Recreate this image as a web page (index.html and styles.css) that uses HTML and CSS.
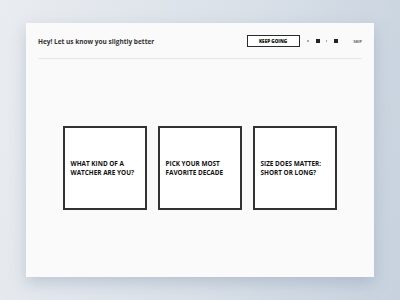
FILE: index.html
```html
<!DOCTYPE html>
<html lang="en">
<head>
    <meta charset="UTF-8">
    <meta name="viewport" content="width=device-width, initial-scale=1.0">
    <title>Onboarding</title>
    <link rel="stylesheet" href="styles.css">
</head>
<body>
    <div class="panel">
        <div class="header">
            <h1 class="title">Hey! Let us know you slightly better</h1>
            <div class="controls">
                <button class="keep-going">KEEP GOING</button>
                <span class="dot"></span>
                <span class="square"></span>
                <span class="dot"></span>
                <span class="square"></span>
                <span class="skip">SKIP</span>
            </div>
        </div>
        <div class="divider"></div>
        <div class="choices">
            <div class="choice">WHAT KIND OF A WATCHER ARE YOU?</div>
            <div class="choice">PICK YOUR MOST FAVORITE DECADE</div>
            <div class="choice">SIZE DOES MATTER: SHORT OR LONG?</div>
        </div>
    </div>
</body>
</html>
```

FILE: styles.css
```css
html, body {
    margin: 0;
    height: 100%;
}
body {
    width: 400px;
    height: 300px;
    padding: 23px 26px;
    box-sizing: border-box;
    background: linear-gradient(100deg, #e9ecf0 0%, #d9e0e8 55%, #c7d2de 100%);
    font-family: "Open Sans", sans-serif;
}
.panel {
    height: 254px;
    background-color: #fafafa;
    box-shadow: 0 6px 14px rgba(120, 140, 165, 0.35);
    padding: 12px 12px 0 12px;
    box-sizing: border-box;
    display: flex;
    flex-direction: column;
}
.header {
    display: flex;
    align-items: center;
    justify-content: space-between;
    height: 12px;
}
.title {
    margin: 0;
    font-size: 6.5px;
    font-weight: 700;
    color: #333;
}
.controls {
    display: flex;
    align-items: center;
}
.keep-going {
    width: 53px;
    height: 12px;
    padding: 0;
    border: 1.2px solid #2a2a2a;
    background-color: #fff;
    font-family: "Open Sans", sans-serif;
    font-size: 4.6px;
    font-weight: 800;
    color: #111;
    margin-right: 7.5px;
}
.dot {
    width: 1.5px;
    height: 1.5px;
    background-color: #aaa;
}
.square {
    width: 3.5px;
    height: 3.5px;
    background-color: #222;
    margin: 0 6px 0 7.5px;
}
.square + .dot + .square {
    margin-left: 7px;
    margin-right: 0;
}
.skip {
    font-size: 4px;
    font-weight: 600;
    color: #333;
    margin-left: 16px;
}
.divider {
    height: 1px;
    background-color: #e6e6e6;
    margin-top: 11px;
}
.choices {
    flex: 1;
    display: flex;
    align-items: center;
    justify-content: center;
    gap: 11px;
}
.choice {
    width: 84px;
    height: 84px;
    box-sizing: border-box;
    border: 2px solid #333;
    background-color: #fff;
    padding: 0 5.5px;
    display: flex;
    align-items: center;
    font-size: 6.4px;
    font-weight: 700;
    line-height: 9px;
    color: #111;
}
```
